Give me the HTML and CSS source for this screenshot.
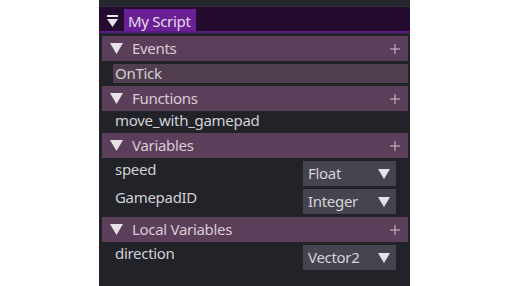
FILE: index.html
```html
<!DOCTYPE html>
<html>
<head>
  <meta charset="UTF-8">
  <link rel="stylesheet" href="styles.css">
</head>
<body>
  <div class="panel">
    <div class="panel-top"></div>

    <div class="script-header">
      <span class="script-icon">
        <svg width="11" height="12" viewBox="0 0 11 12">
          <rect x="0" y="0" width="11" height="2" fill="#e8e4ea"/>
          <polygon points="0,4 11,4 5.5,12" fill="#e8e4ea"/>
        </svg>
      </span>
      <span class="script-name">My Script</span>
    </div>

    <div class="sections">
      <div class="section">
        <div class="section-bar">
          <svg class="fold" width="13" height="11" viewBox="0 0 13 11"><polygon points="0,0 13,0 6.5,11" fill="#e6e2e6"/></svg>
          <span class="section-title">Events</span>
          <svg class="add" width="10" height="10" viewBox="0 0 10 10"><path d="M5 0V10M0 5H10" stroke="#cfc6cf" stroke-width="1"/></svg>
        </div>
        <div class="item selected">OnTick</div>
      </div>

      <div class="section">
        <div class="section-bar">
          <svg class="fold" width="13" height="11" viewBox="0 0 13 11"><polygon points="0,0 13,0 6.5,11" fill="#e6e2e6"/></svg>
          <span class="section-title">Functions</span>
          <svg class="add" width="10" height="10" viewBox="0 0 10 10"><path d="M5 0V10M0 5H10" stroke="#cfc6cf" stroke-width="1"/></svg>
        </div>
        <div class="item">move_with_gamepad</div>
      </div>

      <div class="section">
        <div class="section-bar">
          <svg class="fold" width="13" height="11" viewBox="0 0 13 11"><polygon points="0,0 13,0 6.5,11" fill="#e6e2e6"/></svg>
          <span class="section-title">Variables</span>
          <svg class="add" width="10" height="10" viewBox="0 0 10 10"><path d="M5 0V10M0 5H10" stroke="#cfc6cf" stroke-width="1"/></svg>
        </div>
        <div class="var-row">
          <span class="var-name">speed</span>
          <div class="dropdown">
            <span>Float</span>
            <svg width="12" height="10" viewBox="0 0 12 10"><polygon points="0,0 12,0 6,10" fill="#e4e4e8"/></svg>
          </div>
        </div>
        <div class="var-row">
          <span class="var-name">GamepadID</span>
          <div class="dropdown">
            <span>Integer</span>
            <svg width="12" height="10" viewBox="0 0 12 10"><polygon points="0,0 12,0 6,10" fill="#e4e4e8"/></svg>
          </div>
        </div>
      </div>

      <div class="section">
        <div class="section-bar">
          <svg class="fold" width="13" height="11" viewBox="0 0 13 11"><polygon points="0,0 13,0 6.5,11" fill="#e6e2e6"/></svg>
          <span class="section-title">Local Variables</span>
          <svg class="add" width="10" height="10" viewBox="0 0 10 10"><path d="M5 0V10M0 5H10" stroke="#cfc6cf" stroke-width="1"/></svg>
        </div>
        <div class="var-row">
          <span class="var-name">direction</span>
          <div class="dropdown">
            <span>Vector2</span>
            <svg width="12" height="10" viewBox="0 0 12 10"><polygon points="0,0 12,0 6,10" fill="#e4e4e8"/></svg>
          </div>
        </div>
      </div>
    </div>
  </div>
</body>
</html>
```

FILE: styles.css
```css
html, body {
  margin: 0;
  height: 100%;
  background-color: #FFF;
}

body {
  display: flex;
  padding-left: 99px;
  font-family: "Noto Sans", sans-serif;
  font-size: 15px;
  letter-spacing: -0.3px;
  color: #d2d0d6;
}

.panel {
  width: 311px;
  height: 286px;
  background-color: #212329;
  display: flex;
  flex-direction: column;
}

.panel-top {
  height: 6px;
  background-color: #24272d;
  border-bottom: 1px solid #2d3037;
}

/* Script header */
.script-header {
  display: flex;
  align-items: flex-end;
  height: 24px;
  background-color: #240c31;
  border-bottom: 2px solid #5b1b84;
}

.script-icon {
  width: 25px;
  height: 24px;
  display: flex;
  justify-content: center;
  padding-top: 8px;
  box-sizing: border-box;
}

.script-icon svg {
  display: block;
  margin-left: 1px;
}

.script-name {
  height: 22px;
  line-height: 22px;
  padding: 1px 5px 0 4px;
  box-sizing: border-box;
  background-color: #6b1f95;
  color: #e6dcea;
}

/* Sections */
.sections {
  display: flex;
  flex-direction: column;
  gap: 3px;
  padding: 3px 2px 0 3px;
}

.section {
  display: flex;
  flex-direction: column;
}

.section-bar {
  display: flex;
  align-items: center;
  height: 25px;
  background-color: #5b3f5a;
}

.section-bar .fold {
  margin-left: 8px;
  margin-right: 9px;
}

.section-title {
  flex: 1;
  line-height: 25px;
  color: #d8ccd6;
}

.section-bar .add {
  margin-right: 8px;
}

.item {
  height: 19px;
  line-height: 19px;
  padding-left: 13px;
}

.item.selected {
  margin: 3px 0 0 11px;
  padding-left: 2px;
  background-color: #513f50;
}

.var-row {
  display: flex;
  justify-content: space-between;
  align-items: flex-start;
  height: 28px;
  padding-top: 3px;
  box-sizing: border-box;
}

.var-name {
  padding-left: 13px;
  line-height: 17px;
}

.dropdown {
  display: flex;
  align-items: center;
  justify-content: space-between;
  width: 93px;
  height: 25px;
  line-height: 25px;
  margin-right: 12px;
  padding: 0 6px 0 5px;
  box-sizing: border-box;
  background-color: #46444e;
  color: #d6d4da;
}
```
